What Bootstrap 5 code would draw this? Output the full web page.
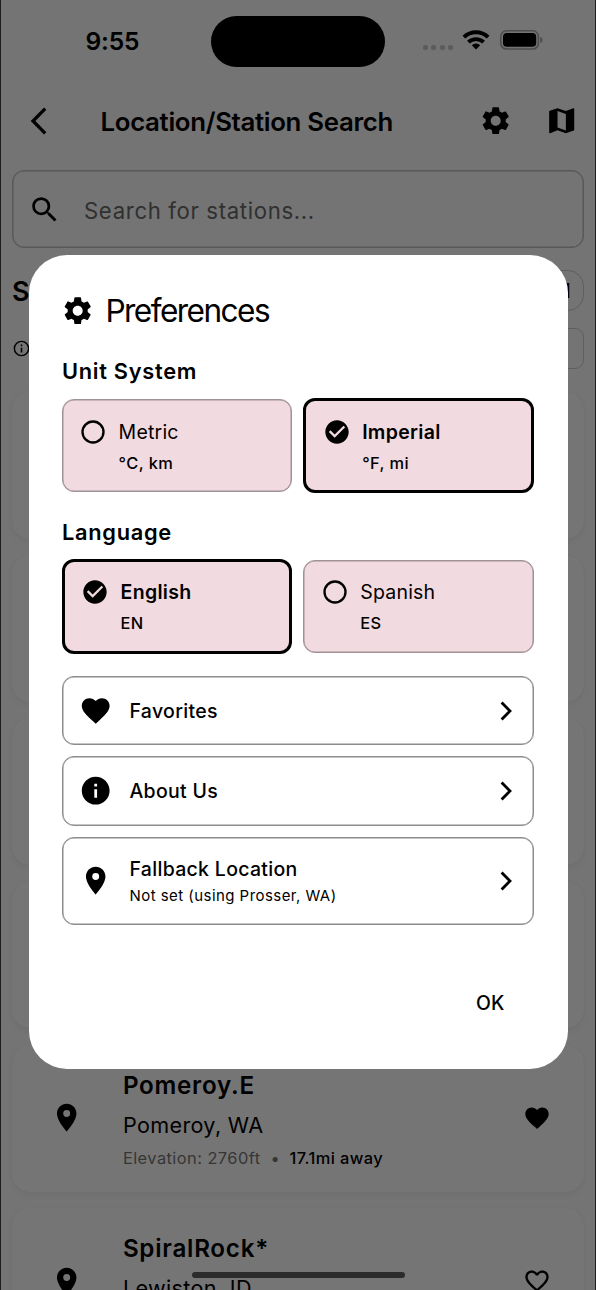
<!DOCTYPE html>
<html lang="en">
<head>
<meta charset="utf-8">
<meta name="viewport" content="width=device-width, initial-scale=1">
<title>Location/Station Search</title>
<link rel="stylesheet" href="https://cdn.jsdelivr.net/npm/bootstrap@5.3.0/dist/css/bootstrap.min.css">
<style>
  body{font-family:Inter,"Liberation Sans",sans-serif;background:#757575;color:#000;height:1290px;overflow:hidden}
  .phone{height:1290px;border:solid #1e1e1e;border-width:0 1px;background:#747474;white-space:nowrap}
  svg{display:block;flex:none;fill:currentColor}
  .i33{width:33.4px;height:33.4px}
  .i28{width:28px;height:28px}
  /* status bar */
  .status{height:81px;padding-left:84.5px}
  .clock{font-size:24.6px;font-weight:600;line-height:30px;width:125.5px;letter-spacing:-.2px}
  .island{width:174px;height:51px;margin-top:2px;background:#000;border-radius:26px}
  .dots{gap:3.3px;margin-left:38px;padding-top:13px}
  .dots i{width:5px;height:5px;border-radius:1.8px;background:#5c5c5c}
  /* app bar */
  .appbar{height:80px;padding-left:29px}
  .apptitle{font-size:25.8px;font-weight:600;line-height:34px;letter-spacing:-.32px;margin:2px 0 0 52.5px;width:378.5px}
  .search{height:78px;margin:9.4px 11px 0;border:1px solid #585858;box-shadow:inset 0 0 0 .5px #585858;border-radius:12px;padding-left:15px}
  .search span{font-size:22.2px;letter-spacing:.64px;color:#303030;margin:2px 0 0 22.6px}
  .headrow{height:41px;margin:22px 11px 0}
  .pill{height:41px;width:90px;border:1px solid #5f5f5f;border-radius:16px;padding-right:12.5px;font-size:20px;font-weight:600}
  .pick{height:41px;width:90px;border:1px solid #5f5f5f;border-radius:9px}
  .cards{margin:22.5px 11px 0}
  .station{height:147px;margin-bottom:16.2px;border-radius:18px;background:#757575;box-shadow:0 3px 6px rgba(0,0,0,.045),0 0 2px rgba(0,0,0,.04);padding:0 33px 0 38px}
  .station-text{margin-left:39.5px;padding-top:4px}
  .st1{font-size:24.2px;font-weight:600;line-height:32px;letter-spacing:.75px}
  .st2{font-size:21.6px;line-height:30px;margin-top:8px;letter-spacing:.34px}
  .st3{font-size:16.4px;line-height:24px;margin-top:6px;letter-spacing:.45px}
  .st3 .elev{color:#353535}
  .st3 b{font-weight:500;margin-left:-1px}
  /* preferences dialog */
  .prefs{left:28.5px;top:255.3px;width:539px;height:813.5px;border-radius:38px;background:#fff;padding:35.2px 33.7px 0 33px}
  .ptitle{font-size:31.6px;line-height:40px;letter-spacing:-1.55px;margin:1px 0 -1px 11px}
  .sect{font-size:21.8px;font-weight:600;line-height:28px;letter-spacing:.72px;padding-left:.5px}
  .opts{display:grid;grid-template-columns:1fr 1fr;gap:11px;height:95px}
  .opt{height:93px;background:#f1dae0;border:1px solid #9f9296;box-shadow:inset 0 0 0 .5px #9f9296;border-radius:12px;padding:17.5px 0 0 16.6px}
  .opt.on{height:95px;border:3px solid #000;box-shadow:none;padding:16.4px 0 0 16.5px}
  .opt div{margin-left:11.5px}
  .o1{display:block;font-size:19.5px;line-height:28px;letter-spacing:.2px}
  .on .o1{font-weight:600;letter-spacing:.32px}
  .o2{display:block;font-size:16.4px;font-weight:500;line-height:24px;margin-top:5px;letter-spacing:.4px}
  .entry{height:69.3px;border:1px solid #8c8c8c;box-shadow:inset 0 0 0 .5px #8c8c8c;border-radius:12px;padding:0 21.3px 0 16.3px;margin-bottom:11px}
  .entry.tall{height:88.5px;margin-bottom:0}
  .entry-text{margin-left:17.3px;padding-top:1px}
  .e1{display:block;font-size:19.5px;font-weight:500;line-height:26px;letter-spacing:.3px}
  .e2{display:block;font-size:15px;line-height:22px;margin-top:3.5px;letter-spacing:.45px}
  .okb{font-size:19.4px;font-weight:500;line-height:26px;margin:65px 29.5px 0 0}
  .homebar{left:192px;top:1271.7px;width:212.5px;height:6.6px;border-radius:4px;background:#2b2b2b}
</style>
</head>
<body>
<svg class="d-none">
  <symbol id="gear" viewBox="0 0 24 24"><path d="M19.14 12.94c.04-.3.06-.61.06-.94 0-.32-.02-.64-.07-.94l2.03-1.58c.18-.14.23-.41.12-.61l-1.92-3.32c-.12-.22-.37-.29-.59-.22l-2.39.96c-.5-.38-1.03-.7-1.62-.94l-.36-2.54c-.04-.24-.24-.41-.48-.41h-3.84c-.24 0-.43.17-.47.41l-.36 2.54c-.59.24-1.13.57-1.62.94l-2.39-.96c-.22-.08-.47 0-.59.22L2.74 8.87c-.12.21-.08.47.12.61l2.03 1.58c-.05.3-.09.63-.09.94s.02.64.07.94l-2.03 1.58c-.18.14-.23.41-.12.61l1.92 3.32c.12.22.37.29.59.22l2.39-.96c.5.38 1.03.7 1.62.94l.36 2.54c.05.24.24.41.48.41h3.84c.24 0 .44-.17.47-.41l.36-2.54c.59-.24 1.13-.56 1.62-.94l2.39.96c.22.08.47 0 .59-.22l1.92-3.32c.12-.22.07-.47-.12-.61l-2.01-1.58zM12 15.6c-1.98 0-3.6-1.62-3.6-3.6s1.62-3.6 3.6-3.6 3.6 1.62 3.6 3.6-1.62 3.6-3.6 3.6z"/></symbol>
  <symbol id="pin" viewBox="0 0 24 24"><path d="M12 2C8.13 2 5 5.13 5 9c0 5.25 7 13 7 13s7-7.75 7-13c0-3.87-3.13-7-7-7zm0 9.5a2.5 2.5 0 0 1 0-5 2.5 2.5 0 0 1 0 5z"/></symbol>
  <symbol id="heart" viewBox="0 0 24 24"><path d="M12 21.35l-1.45-1.32C5.4 15.36 2 12.28 2 8.5 2 5.42 4.42 3 7.5 3c1.74 0 3.41.81 4.5 2.09C13.09 3.81 14.76 3 16.5 3 19.58 3 22 5.42 22 8.5c0 3.78-3.4 6.86-8.55 11.54L12 21.35z"/></symbol>
  <symbol id="heart-o" viewBox="0 0 24 24"><path d="M16.5 3c-1.74 0-3.41.81-4.5 2.09C10.91 3.81 9.24 3 7.5 3 4.42 3 2 5.42 2 8.5c0 3.78 3.4 6.86 8.55 11.54L12 21.35l1.45-1.32C18.6 15.36 22 12.28 22 8.5 22 5.42 19.58 3 16.5 3zm-4.4 15.55l-.1.1-.1-.1C7.14 14.24 4 11.39 4 8.5 4 6.5 5.5 5 7.5 5c1.54 0 3.04.99 3.57 2.36h1.87C13.46 5.99 14.96 5 16.5 5c2 0 3.5 1.5 3.5 3.5 0 2.89-3.14 5.74-7.9 10.05z"/></symbol>
  <symbol id="ring" viewBox="0 0 24 24"><circle cx="12" cy="12" r="9" fill="none" stroke="currentColor" stroke-width="2"/></symbol>
  <symbol id="check" viewBox="0 0 24 24"><path d="M12 2C6.48 2 2 6.48 2 12s4.48 10 10 10 10-4.48 10-10S17.52 2 12 2zm-2 15l-5-5 1.41-1.41L10 14.17l7.59-7.59L19 8l-9 9z"/></symbol>
  <symbol id="chev" viewBox="0 0 12 20"><path d="M1.6 1.4 10 10 1.6 18.6" fill="none" stroke="currentColor" stroke-width="2.8"/></symbol>
</svg>

<div class="phone position-relative overflow-hidden">
  <div class="status d-flex align-items-center">
    <span class="clock">9:55</span>
    <div class="island"></div>
    <div class="dots d-flex"><i></i><i></i><i></i><i></i></div>
    <svg width="28" height="20" viewBox="0 0 28 20" style="margin:-1px 0 0 9.5px"><g fill="none" stroke="#000" stroke-width="3.9"><path d="M1.9 7.2A17.2 17.2 0 0 1 26.1 7.2"/><path d="M6.4 12.2A11 11 0 0 1 21.6 12.2"/></g><path d="M14 19.5 9.8 15.2a6 6 0 0 1 8.4 0z"/></svg>
    <svg width="44" height="20" viewBox="0 0 44 20" style="margin:-1px 0 0 10px"><rect x=".8" y=".8" width="37.6" height="18.2" rx="5.6" fill="none" stroke="#4c4c4c" stroke-width="1.5"/><rect x="3" y="3" width="33.2" height="13.8" rx="3.8"/><path d="M40.3 6.7q2.2.8 2.2 3.2t-2.2 3.2z" fill="#4c4c4c"/></svg>
  </div>

  <div class="appbar d-flex align-items-center">
    <svg width="18" height="28" viewBox="0 0 18 28"><path d="M15.2 1.6 3 14 15.2 26.4" fill="none" stroke="#000" stroke-width="3.3"/></svg>
    <div class="apptitle">Location/Station Search</div>
    <svg class="i33"><use href="#gear"/></svg>
    <svg class="i33" viewBox="0 0 24 24" style="margin-left:33px"><path d="M20.5 3l-.16.03L15 5.1 9 3 3.36 4.9c-.21.07-.36.25-.36.48V20.5c0 .28.22.5.5.5l.16-.03L9 18.9l6 2.1 5.64-1.9c.21-.07.36-.25.36-.48V3.5c0-.28-.22-.5-.5-.5zM15 19l-6-2.11V5l6 2.11V19z"/></svg>
  </div>

  <div class="search d-flex align-items-center">
    <svg class="i33" viewBox="0 0 24 24"><path d="M15.5 14h-.79l-.28-.27A6.471 6.471 0 0 0 16 9.5 6.5 6.5 0 1 0 9.5 16c1.61 0 3.09-.59 4.23-1.57l.27.28v.79l5 4.99L20.49 19l-4.99-5zm-6 0C7.01 14 5 11.99 5 9.5S7.01 5 9.5 5 14 7.01 14 9.5 11.99 14 9.5 14z"/></svg>
    <span>Search for stations...</span>
  </div>

  <div class="headrow d-flex align-items-center justify-content-between">
    <span style="font-size:27px;font-weight:600;padding-top:2px">S</span>
    <div class="pill d-flex align-items-center justify-content-end">d</div>
  </div>
  <div class="d-flex align-items-center justify-content-between" style="margin:17px 11px 0">
    <svg width="19" height="19" viewBox="0 0 24 24"><circle cx="12" cy="12" r="9" fill="none" stroke="#000" stroke-width="1.8"/><path d="M11 11h2v6h-2zM11 7h2v2h-2z"/></svg>
    <div class="pick"></div>
  </div>

  <div class="cards">
    <div class="station"></div>
    <div class="station"></div>
    <div class="station"></div>
    <div class="station"></div>
    <div class="station d-flex align-items-center">
      <svg class="i33"><use href="#pin"/></svg>
      <div class="station-text flex-grow-1">
        <div class="st1">Pomeroy.E</div>
        <div class="st2">Pomeroy, WA</div>
        <div class="st3"><span class="elev">Elevation: 2760ft &nbsp;•&nbsp; </span><b>17.1mi away</b></div>
      </div>
      <svg class="i28"><use href="#heart"/></svg>
    </div>
    <div class="station d-flex align-items-center">
      <svg class="i33"><use href="#pin"/></svg>
      <div class="station-text flex-grow-1">
        <div class="st1">SpiralRock*</div>
        <div class="st2">Lewiston, ID</div>
        <div class="st3">&nbsp;</div>
      </div>
      <svg class="i28"><use href="#heart-o"/></svg>
    </div>
  </div>
</div>

<div class="prefs position-absolute text-nowrap" role="dialog">
  <div class="d-flex align-items-center">
    <svg class="i33" style="margin-left:-.5px"><use href="#gear"/></svg>
    <div class="ptitle">Preferences</div>
  </div>
  <div class="sect" style="margin-top:26.5px">Unit System</div>
  <div class="opts align-items-center" style="margin-top:13.5px">
    <div class="opt d-flex">
      <svg class="i28"><use href="#ring"/></svg>
      <div><span class="o1">Metric</span><span class="o2">°C, km</span></div>
    </div>
    <div class="opt on d-flex">
      <svg class="i28"><use href="#check"/></svg>
      <div><span class="o1">Imperial</span><span class="o2">°F, mi</span></div>
    </div>
  </div>
  <div class="sect" style="margin-top:24.5px">Language</div>
  <div class="opts align-items-center" style="margin-top:13px">
    <div class="opt on d-flex">
      <svg class="i28"><use href="#check"/></svg>
      <div><span class="o1">English</span><span class="o2">EN</span></div>
    </div>
    <div class="opt d-flex">
      <svg class="i28"><use href="#ring"/></svg>
      <div><span class="o1">Spanish</span><span class="o2">ES</span></div>
    </div>
  </div>
  <div style="margin-top:22px">
    <div class="entry d-flex align-items-center">
      <svg class="i33"><use href="#heart"/></svg>
      <div class="entry-text flex-grow-1"><span class="e1">Favorites</span></div>
      <svg width="12" height="20"><use href="#chev"/></svg>
    </div>
    <div class="entry d-flex align-items-center">
      <svg class="i33" viewBox="0 0 24 24"><path d="M12 2C6.48 2 2 6.48 2 12s4.48 10 10 10 10-4.48 10-10S17.52 2 12 2zm1 15h-2v-6h2v6zm0-8h-2V7h2v2z"/></svg>
      <div class="entry-text flex-grow-1"><span class="e1">About Us</span></div>
      <svg width="12" height="20"><use href="#chev"/></svg>
    </div>
    <div class="entry tall d-flex align-items-center">
      <svg class="i33"><use href="#pin"/></svg>
      <div class="entry-text flex-grow-1"><span class="e1">Fallback Location</span><span class="e2">Not set (using Prosser, WA)</span></div>
      <svg width="12" height="20"><use href="#chev"/></svg>
    </div>
  </div>
  <div class="okb text-end">OK</div>
</div>
<div class="homebar position-absolute"></div>
<script src="https://cdn.jsdelivr.net/npm/bootstrap@5.3.0/dist/js/bootstrap.bundle.min.js"></script>
</body>
</html>
